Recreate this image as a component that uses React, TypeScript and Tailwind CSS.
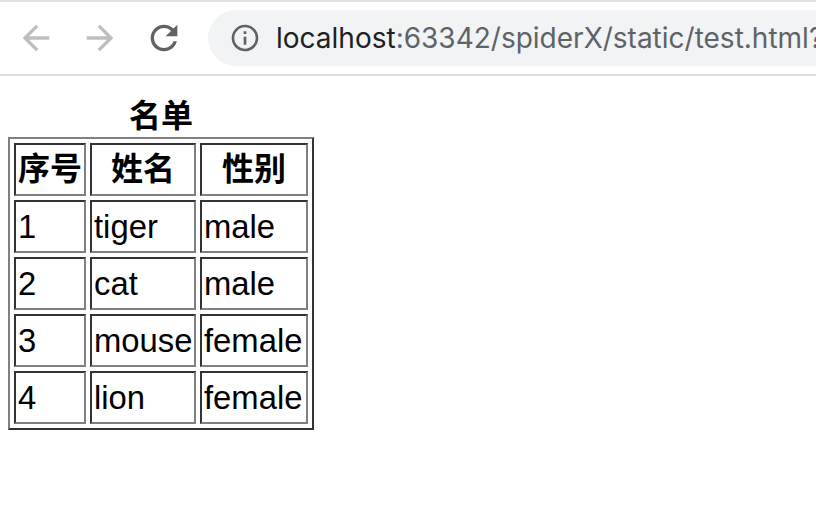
const people = [
  { id: "1", name: "tiger", sex: "male" },
  { id: "2", name: "cat", sex: "male" },
  { id: "3", name: "mouse", sex: "female" },
  { id: "4", name: "lion", sex: "female" },
];

const cellClass =
  "h-[53px] whitespace-nowrap border-2 border-t-[#333333] border-l-[#333333] border-r-[#808080] border-b-[#808080] p-0";

function Icon({ d, className }: { d: string; className: string }) {
  return (
    <svg viewBox="0 0 24 24" fill="currentColor" className={className}>
      <path d={d} />
    </svg>
  );
}

export default function App() {
  return (
    <div className="h-[512px] w-[816px] overflow-hidden bg-white font-['Liberation_Sans','Noto_Sans_CJK_SC',sans-serif] text-black">
      <header className="flex h-[76px] items-center gap-6 border-t-2 border-b-2 border-t-[#dee1e6] border-b-[#dadce0] pl-4">
        <Icon
          d="M20 11H7.83l5.59-5.59L12 4l-8 8 8 8 1.41-1.41L7.83 13H20v-2z"
          className="h-10 w-10 shrink-0 text-[#bebebe]"
        />
        <Icon
          d="M12 4l-1.41 1.41L16.17 11H4v2h12.17l-5.58 5.59L12 20l8-8z"
          className="h-10 w-10 shrink-0 text-[#bebebe]"
        />
        <Icon
          d="M17.65 6.35C16.2 4.9 14.21 4 12 4c-4.42 0-7.99 3.58-7.99 8s3.57 8 7.99 8c3.73 0 6.84-2.55 7.73-6h-2.08c-.82 2.33-3.04 4-5.65 4-3.31 0-6-2.69-6-6s2.69-6 6-6c1.66 0 3.14.69 4.22 1.78L13 11h7V4l-2.35 2.35z"
          className="h-10 w-10 shrink-0 text-[#5f6368]"
        />
        <div className="flex h-[56px] min-w-0 flex-1 items-center gap-[15px] overflow-hidden rounded-l-[28px] bg-[#f1f3f4] pl-[21px]">
          <Icon
            d="M11 7h2v2h-2zm0 4h2v6h-2zm1-9C6.48 2 2 6.48 2 12s4.48 10 10 10 10-4.48 10-10S17.52 2 12 2zm0 18c-4.41 0-8-3.59-8-8s3.59-8 8-8 8 3.59 8 8-3.59 8-8 8z"
            className="h-8 w-8 shrink-0 text-[#5f6368]"
          />
          <span className="whitespace-nowrap font-['Inter',sans-serif] text-[28px] text-[#5f6368]">
            <span className="text-[#202124]">localhost</span>:63342/spiderX/static/test.html?
          </span>
        </div>
      </header>

      <div className="pl-2">
        <table className="w-[306px] table-fixed border-separate border-spacing-[4px] border-2 border-t-[#808080] border-l-[#808080] border-r-[#333333] border-b-[#333333] text-[32.8px] leading-[37px]">
          <caption className="h-[61px] pt-[21px] text-center text-[32px] leading-[38px] font-bold">名单</caption>
          <thead>
            <tr>
              <th className={`${cellClass} w-[72px] text-center text-[32px] font-bold`}>序号</th>
              <th className={`${cellClass} w-[106px] text-center text-[32px] font-bold`}>姓名</th>
              <th className={`${cellClass} w-[108px] text-center text-[32px] font-bold`}>性别</th>
            </tr>
          </thead>
          <tbody>
            {people.map((person) => (
              <tr key={person.id}>
                <td className={`${cellClass} px-[2px]`}>{person.id}</td>
                <td className={`${cellClass} px-[2px]`}>{person.name}</td>
                <td className={`${cellClass} px-[2px]`}>{person.sex}</td>
              </tr>
            ))}
          </tbody>
        </table>
      </div>
    </div>
  );
}
